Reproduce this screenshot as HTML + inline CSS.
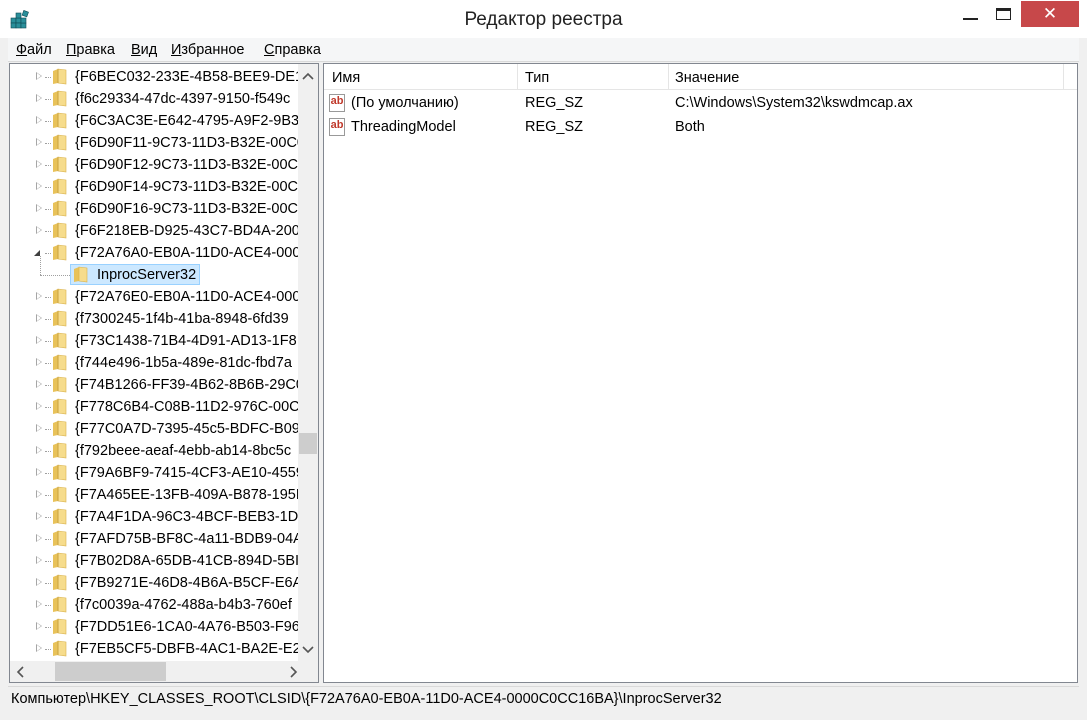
<!DOCTYPE html>
<html><head><meta charset="utf-8"><style>
*{margin:0;padding:0;box-sizing:border-box}
body{width:1087px;height:720px;overflow:hidden;background:#f0f0f0;font-family:"Liberation Sans","DejaVu Sans",sans-serif;font-size:14px;color:#000;position:relative}
.abs{position:absolute}
#title{left:0;top:0;width:1087px;height:38px;background:#fff}
#menu{left:8px;top:38px;width:1071px;height:24px;background:#f5f6f7;border-bottom:1px solid #d9d9d9}
#menu span{position:absolute;top:4px;font-size:14.5px}
#left{left:9px;top:63px;width:310px;height:620px;background:#fff;border:1px solid #828790}
#right{left:323px;top:63px;width:755px;height:620px;background:#fff;border:1px solid #828790;font-size:14.5px}
.row{position:absolute;left:0;height:22px;white-space:nowrap;font-size:14.5px}
.row .t{position:absolute;left:65px;top:3px}
.row .e{position:absolute;left:26px;top:6px;width:0;height:0;border-top:4px solid transparent;border-bottom:4px solid transparent;border-left:6px solid #a6a6a6}
.row .e:after{content:"";position:absolute;left:-5px;top:-3px;border-top:3px solid transparent;border-bottom:3px solid transparent;border-left:4px solid #fff}
.row .d{position:absolute;left:35px;top:11px;width:6px;border-top:1px dotted #a0a0a0}
.fold{position:absolute;left:42px;top:2px;width:15px;height:17px}
#status{left:8px;top:686px;width:1071px;height:25px;background:#f0f0f0;border-top:1px solid #d9d9d9;font-size:14.5px}
</style></head><body>
<div id="title" class="abs">
 <svg class="abs" style="left:10px;top:9px" width="22" height="20" viewBox="0 0 22 20"><g fill="#2a8f9a" stroke="#0f4c55" stroke-width=".6"><rect x="1" y="9" width="5" height="5"/><rect x="6" y="9" width="5" height="5"/><rect x="1" y="14" width="5" height="5"/><rect x="6" y="14" width="5" height="5"/><rect x="11" y="14" width="5" height="5"/><rect x="11" y="9" width="5" height="5"/><rect x="6" y="4" width="5" height="5"/><rect x="13" y="2" width="5" height="5" transform="rotate(20 15 4)"/></g></svg>
 <div class="abs" style="left:0;width:1087px;top:9px;text-align:center;font-size:19px;color:#222">Редактор реестра</div>
 <div class="abs" style="left:963px;top:18px;width:15px;height:2px;background:#222"></div>
 <div class="abs" style="left:996px;top:8px;width:15px;height:12px;border:1px solid #222;border-top:3px solid #222"></div>
 <div class="abs" style="left:1021px;top:1px;width:58px;height:26px;background:#c7484a;color:#fff;text-align:center;font-size:17px;line-height:25px;font-weight:bold">✕</div>
</div>
<div id="menu" class="abs">
 <span style="left:8px"><u>Ф</u>айл</span><span style="left:58px"><u>П</u>равка</span><span style="left:123px"><u>В</u>ид</span><span style="left:163px"><u>И</u>збранное</span><span style="left:256px"><u>С</u>правка</span>
</div>
<div id="left" class="abs">
<div class="abs" style="left:0;top:0;width:288px;height:597px;overflow:hidden" id="tree"></div>
<div class="abs" style="left:288px;top:0;width:20px;height:597px;background:#f0f0f0"></div>
<svg class="abs" style="left:292px;top:8px" width="12" height="8"><path d="M1 7 L6 2 L11 7" fill="none" stroke="#555" stroke-width="1.6"/></svg>
<svg class="abs" style="left:292px;top:582px" width="12" height="8"><path d="M1 1 L6 6 L11 1" fill="none" stroke="#555" stroke-width="1.6"/></svg>
<div class="abs" style="left:289px;top:369px;width:18px;height:21px;background:#cdcdcd"></div>
<div class="abs" style="left:0;top:597px;width:308px;height:21px;background:#f0f0f0"></div>
<div class="abs" style="left:45px;top:598px;width:111px;height:19px;background:#cdcdcd"></div>
<svg class="abs" style="left:6px;top:602px" width="8" height="12"><path d="M7 1 L2 6 L7 11" fill="none" stroke="#555" stroke-width="1.6"/></svg>
<svg class="abs" style="left:280px;top:602px" width="8" height="12"><path d="M1 1 L6 6 L1 11" fill="none" stroke="#555" stroke-width="1.6"/></svg>
</div>
<div id="right" class="abs">
 <div class="abs" style="left:0;top:0;width:753px;height:26px;border-bottom:1px solid #e5e5e5"></div>
 <div class="abs" style="left:193px;top:0;height:26px;border-left:1px solid #e5e5e5"></div>
 <div class="abs" style="left:344px;top:0;height:26px;border-left:1px solid #e5e5e5"></div>
 <div class="abs" style="left:739px;top:0;height:26px;border-left:1px solid #e5e5e5"></div>
 <div class="abs" style="left:8px;top:6px">Имя</div>
 <div class="abs" style="left:201px;top:6px">Тип</div>
 <div class="abs" style="left:351px;top:6px">Значение</div>
 <div class="abs" style="left:5px;top:30px;width:16px;height:18px;border:1px solid #999;background:#fff;color:#c0392b;font-size:11px;font-weight:bold;line-height:12px;text-align:center">ab</div>
 <div class="abs" style="left:27px;top:31px">(По умолчанию)</div>
 <div class="abs" style="left:201px;top:31px">REG_SZ</div>
 <div class="abs" style="left:351px;top:31px">C:\Windows\System32\kswdmcap.ax</div>
 <div class="abs" style="left:5px;top:54px;width:16px;height:18px;border:1px solid #999;background:#fff;color:#c0392b;font-size:11px;font-weight:bold;line-height:12px;text-align:center">ab</div>
 <div class="abs" style="left:27px;top:55px">ThreadingModel</div>
 <div class="abs" style="left:201px;top:55px">REG_SZ</div>
 <div class="abs" style="left:351px;top:55px">Both</div>
</div>
<div id="status" class="abs"><div class="abs" style="left:3px;top:4px">Компьютер\HKEY_CLASSES_ROOT\CLSID\{F72A76A0-EB0A-11D0-ACE4-0000C0CC16BA}\InprocServer32</div></div>
<script>
var items=["{F6BEC032-233E-4B58-BEE9-DE13","{f6c29334-47dc-4397-9150-f549c","{F6C3AC3E-E642-4795-A9F2-9B3A","{F6D90F11-9C73-11D3-B32E-00C0","{F6D90F12-9C73-11D3-B32E-00C0","{F6D90F14-9C73-11D3-B32E-00C0","{F6D90F16-9C73-11D3-B32E-00C0","{F6F218EB-D925-43C7-BD4A-200","{F72A76A0-EB0A-11D0-ACE4-000","*InprocServer32","{F72A76E0-EB0A-11D0-ACE4-000","{f7300245-1f4b-41ba-8948-6fd39","{F73C1438-71B4-4D91-AD13-1F8","{f744e496-1b5a-489e-81dc-fbd7a","{F74B1266-FF39-4B62-8B6B-29C0","{F778C6B4-C08B-11D2-976C-00C0","{F77C0A7D-7395-45c5-BDFC-B09","{f792beee-aeaf-4ebb-ab14-8bc5c","{F79A6BF9-7415-4CF3-AE10-4559","{F7A465EE-13FB-409A-B878-195E","{F7A4F1DA-96C3-4BCF-BEB3-1D9","{F7AFD75B-BF8C-4a11-BDB9-04A","{F7B02D8A-65DB-41CB-894D-5BI","{F7B9271E-46D8-4B6A-B5CF-E6A","{f7c0039a-4762-488a-b4b3-760ef","{F7DD51E6-1CA0-4A76-B503-F96","{F7EB5CF5-DBFB-4AC1-BA2E-E2C"];
var fold='<svg class="fold" viewBox="0 0 15 17"><path d="M1 3 L6 1 L6 15 L1 16Z" fill="#e8c25a"/><path d="M6 1 L14 2 L14 16 L6 15Z" fill="#f6dc8c" stroke="#d9b14a" stroke-width=".6"/><path d="M6 1 L6 15" stroke="#c9a23f"/></svg>';
var h="";items.forEach(function(s,i){var y=2+i*22;
if(s[0]=="*"){h+='<div class="row" style="top:'+y+'px;width:288px"><div class="abs" style="left:30px;top:-8px;height:19px;border-left:1px dotted #a0a0a0"></div><div class="abs" style="left:30px;top:11px;width:30px;border-top:1px dotted #a0a0a0"></div><div class="abs" style="left:60px;top:0;width:130px;height:21px;background:#cce8ff;border:1px solid #99d1ff"></div><svg class="fold" style="left:63px" viewBox="0 0 15 17"><path d="M1 3 L6 1 L6 15 L1 16Z" fill="#e8c25a"/><path d="M6 1 L14 2 L14 16 L6 15Z" fill="#f6dc8c" stroke="#d9b14a" stroke-width=".6"/></svg><span class="t" style="left:87px">InprocServer32</span></div>';return;}
var exp=(i==8)?'<div class="abs" style="left:24px;top:8px;width:0;height:0;border-left:6px solid transparent;border-bottom:6px solid #404040"></div>':'<div class="e"></div>';
h+='<div class="row" style="top:'+y+'px;width:288px">'+exp+'<div class="d"></div>'+fold+'<span class="t">'+s+'</span></div>';});
document.getElementById("tree").innerHTML=h;
</script>
</body></html>
